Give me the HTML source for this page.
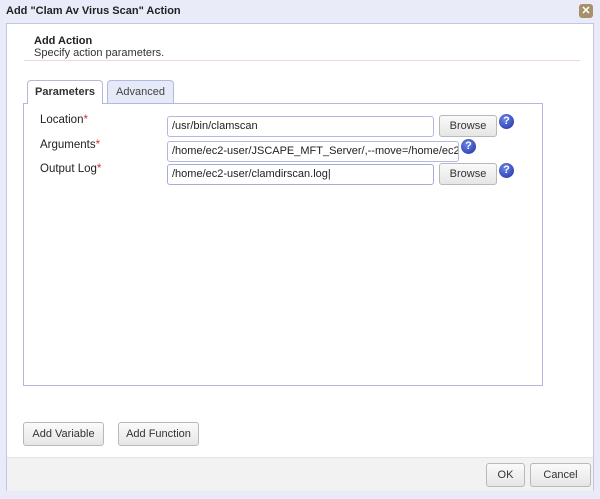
<!DOCTYPE html>
<html><head><style>
body{margin:0;width:600px;height:499px;background:#e9ebf8;font-family:"Liberation Sans",Arial,sans-serif;font-size:11px;color:#222;position:relative;overflow:hidden}
.a{position:absolute}
.inp{position:absolute;border:1px solid #b4b8dc;border-radius:3px;background:#fff;font-size:11px;line-height:19px;padding-left:4px;box-sizing:border-box;height:21px;white-space:nowrap;overflow:hidden}
.btn{position:absolute;border:1px solid #b9b9b9;border-radius:3px;background:linear-gradient(#fafafa,#e6e6e6);font-size:11px;text-align:center;box-sizing:border-box;color:#333}
.q{position:absolute;width:15px;height:15px;border-radius:50%;background:radial-gradient(circle at 40% 35%,#6d86e8,#1b2fa0);color:#fff;font-weight:bold;font-size:11px;text-align:center;line-height:15px}
.lbl{position:absolute;font-size:11.5px;color:#222}
.lbl b{color:#c33;font-weight:normal}
</style></head><body>
<div class="a" style="left:6px;top:5px;font-size:11px;font-weight:bold;color:#222">Add "Clam Av Virus Scan" Action</div>
<div class="a" style="left:579px;top:4px;width:14px;height:14px;background:#a8916a;border-radius:3px;color:#fff;font-size:11px;line-height:14px;text-align:center;font-weight:bold">✕</div>
<div class="a" style="left:6px;top:23px;width:588px;height:468px;background:#fff;border:1px solid #c3c6e3;box-sizing:border-box"></div>
<div class="a" style="left:34px;top:35px;font-weight:bold;font-size:11px">Add Action</div>
<div class="a" style="left:34px;top:47px;font-size:11px;color:#333">Specify action parameters.</div>
<div class="a" style="left:24px;top:60px;width:556px;height:1px;background:#ecd6dc"></div>
<div class="a" style="left:23px;top:103px;width:520px;height:283px;border:1px solid #b4b8dc;box-sizing:border-box"></div>
<div class="a" style="left:27px;top:80px;width:76px;height:24px;border:1px solid #b4b8dc;border-bottom:none;border-radius:4px 4px 0 0;background:#fff;box-sizing:border-box;text-align:center;line-height:22px;font-weight:bold;color:#333">Parameters</div>
<div class="a" style="left:107px;top:80px;width:67px;height:23px;border:1px solid #b4b8dc;border-bottom:none;border-radius:4px 4px 0 0;background:#e6e9f8;box-sizing:border-box;text-align:center;line-height:22px;color:#444">Advanced</div>
<div class="lbl" style="left:40px;top:114px">Location<b>*</b></div>
<div class="lbl" style="left:40px;top:139px">Arguments<b>*</b></div>
<div class="lbl" style="left:40px;top:163px">Output Log<b>*</b></div>
<div class="inp" style="left:167px;top:116px;width:267px">/usr/bin/clamscan</div>
<div class="inp" style="left:167px;top:141px;width:292px">/home/ec2-user/JSCAPE_MFT_Server/,--move=/home/ec2-user</div>
<div class="inp" style="left:167px;top:164px;width:267px;border-color:#a6abd8">/home/ec2-user/clamdirscan.log|</div>
<div class="btn" style="left:439px;top:115px;width:58px;height:22px;line-height:20px">Browse</div>
<div class="btn" style="left:439px;top:163px;width:58px;height:22px;line-height:20px">Browse</div>
<div class="q" style="left:499px;top:114px">?</div>
<div class="q" style="left:461px;top:139px">?</div>
<div class="q" style="left:499px;top:163px">?</div>
<div class="btn" style="left:23px;top:422px;width:81px;height:24px;line-height:22px">Add Variable</div>
<div class="btn" style="left:118px;top:422px;width:81px;height:24px;line-height:22px">Add Function</div>
<div class="a" style="left:7px;top:457px;width:586px;height:33px;background:#f2f2f2;border-top:1px solid #e4e4e4"></div>
<div class="btn" style="left:486px;top:463px;width:39px;height:24px;line-height:22px">OK</div>
<div class="btn" style="left:530px;top:463px;width:61px;height:24px;line-height:22px">Cancel</div>
</body></html>
